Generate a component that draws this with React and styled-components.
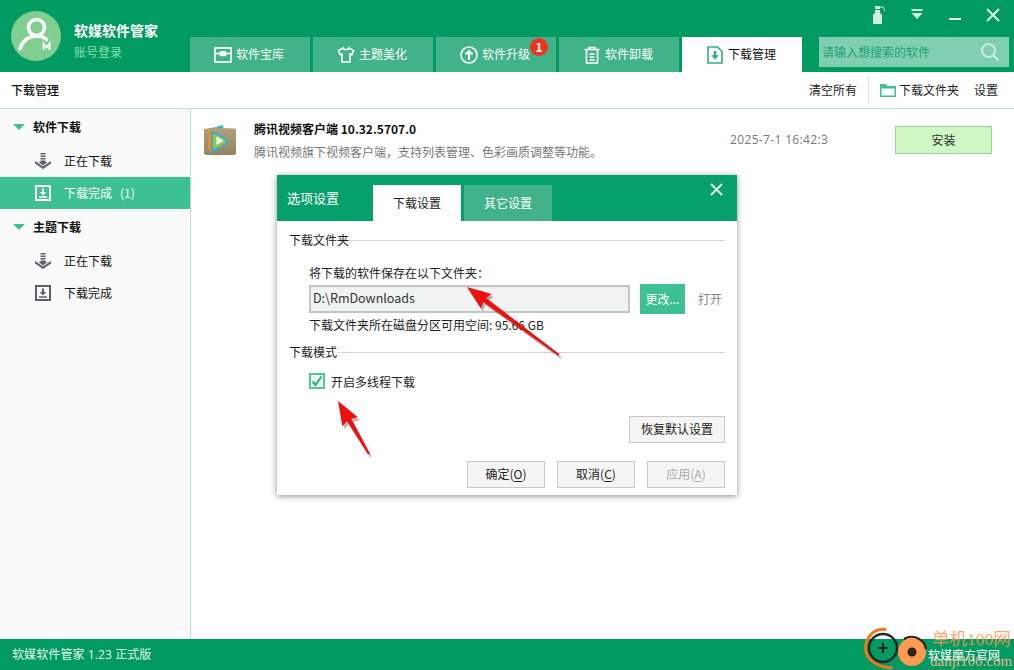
import React from 'react';
import styled, { createGlobalStyle } from 'styled-components';

const GlobalStyle = createGlobalStyle`
  html, body {
    margin: 0;
    padding: 0;
    overflow: hidden;
    background: #ffffff;
  }
  * {
    box-sizing: border-box;
  }
`;

const Page = styled.div`
  position: relative;
  width: 1014px;
  height: 670px;
  overflow: hidden;
  display: flex;
  flex-direction: column;
  font-family: "Noto Sans CJK SC", "Open Sans", sans-serif;
  font-size: 12px;
  color: #222;
`;

// Noto sits a pixel lower than the original font, this lifts a label in a centred row
const Label = styled.span`
  margin-bottom: 2px;
`;

const Header = styled.header`
  height: 72px;
  background: #019a61;
  display: flex;
  flex: none;
`;

const Brand = styled.div`
  width: 190px;
  padding: 11px 0 0 11px;
  display: flex;
  gap: 13px;
`;

const Avatar = styled.div`
  width: 50px;
  height: 50px;
  border-radius: 50%;
  background: #80cf91;
  display: flex;
  align-items: center;
  justify-content: center;
`;

const BrandText = styled.div`
  display: flex;
  flex-direction: column;
  padding-top: 9px;
  gap: 3px;
`;

const BrandName = styled.div`
  color: #fff;
  font-size: 14px;
  font-weight: 700;
  line-height: 20px;
`;

const Login = styled.div`
  color: #86e0b0;
  font-size: 12px;
  line-height: 18px;
`;

const HeaderRight = styled.div`
  flex: 1;
  display: flex;
  flex-direction: column;
`;

const WindowBar = styled.div`
  height: 37px;
  display: flex;
  justify-content: flex-end;
  padding: 3px 2px 0 0;
`;

const WindowButton = styled.div`
  width: 38px;
  height: 24px;
  display: flex;
  align-items: center;
  justify-content: center;
`;

const TabRow = styled.div`
  height: 35px;
  display: flex;
  gap: 3px;
`;

const MainTab = styled.div`
  width: 120px;
  display: flex;
  align-items: center;
  justify-content: center;
  gap: 4px;
  padding-right: 2px;
  position: relative;
  background: ${props => (props.$active ? '#ffffff' : '#42b389')};
  color: ${props => (props.$active ? '#111' : '#fff')};
`;

const Badge = styled.span`
  position: absolute;
  top: 1px;
  right: 8px;
  width: 18px;
  height: 18px;
  border-radius: 50%;
  background: #f0321e;
  color: #fff;
  font-size: 12px;
  font-weight: 700;
  line-height: 18px;
  text-align: center;
`;

const Search = styled.div`
  width: 190px;
  height: 30px;
  margin-left: 14px;
  background: #80cfb0;
  display: flex;
  align-items: center;
  justify-content: space-between;
  padding: 0 9px 0 3px;
  color: #1ea373;
`;

const SubBar = styled.div`
  height: 37px;
  flex: none;
  border-bottom: 1px solid #bfe3d8;
  display: flex;
  align-items: center;
  justify-content: space-between;
  padding: 0 16px 0 11px;
`;

const SubTitle = styled(Label)`
  font-weight: 500;
  color: #111;
`;

const SubActions = styled.div`
  display: flex;
  align-items: center;
`;

const SubDivider = styled.div`
  width: 1px;
  height: 28px;
  margin: 0 11px;
  background: #cfe5dd;
`;

const FolderAction = styled.div`
  display: flex;
  align-items: center;
  gap: 3px;
  margin-right: 15px;
`;

const Body = styled.div`
  flex: 1;
  display: flex;
  min-height: 0;
`;

const Sidebar = styled.aside`
  width: 191px;
  flex: none;
  background: #fafafa;
  border-right: 1px solid #b6e0d2;
  padding-top: 2px;
`;

const GroupHeader = styled.div`
  height: 32px;
  margin-bottom: 2px;
  margin-top: ${props => (props.$spaced ? '2px' : '0')};
  display: flex;
  align-items: center;
  padding-left: 13px;
  gap: 8px;
  font-weight: 700;
  color: #111;
`;

const Caret = styled.span`
  width: 0;
  height: 0;
  border-left: 6px solid transparent;
  border-right: 6px solid transparent;
  border-top: 6px solid #3dc093;
`;

const SideItem = styled.div`
  height: 32px;
  display: flex;
  align-items: center;
  padding-left: 35px;
  gap: 13px;
  background: ${props => (props.$active ? '#3dc093' : 'transparent')};
  color: ${props => (props.$active ? '#fff' : '#111')};
`;

const Main = styled.main`
  flex: 1;
  min-width: 0;
`;

const DownloadRow = styled.div`
  height: 62px;
  display: flex;
  align-items: center;
  padding: 0 22px 0 13px;
`;

const RowText = styled.div`
  flex: 1;
  margin-left: 18px;
  display: flex;
  flex-direction: column;
  gap: 5px;
`;

const RowTitle = styled.div`
  font-weight: 700;
  color: #111;
  line-height: 18px;
`;

const RowDesc = styled.div`
  color: #777;
  line-height: 18px;
`;

const RowDate = styled(Label)`
  width: 165px;
  color: #777;
  font-family: "Open Sans", "Noto Sans CJK SC", sans-serif;
  letter-spacing: 0.35px;
`;

const InstallButton = styled.div`
  width: 97px;
  height: 28px;
  background: #cdf7c3;
  border: 1px solid #9ccf9f;
  color: #333;
  display: flex;
  align-items: center;
  justify-content: center;
`;

const Footer = styled.footer`
  height: 31px;
  flex: none;
  background: #019a61;
  color: #e2f7ec;
  padding-left: 12px;
  display: flex;
  align-items: center;
  font-family: "Open Sans", "Noto Sans CJK SC", sans-serif;
  letter-spacing: 0.1px;
`;

const Dialog = styled.div`
  position: absolute;
  left: 277px;
  top: 175px;
  width: 460px;
  height: 320px;
  background: #fff;
  box-shadow: 0 1px 6px rgba(0, 0, 0, 0.45);
`;

const DialogHeader = styled.div`
  height: 46px;
  background: #06a06a;
  display: flex;
  align-items: flex-end;
  position: relative;
`;

const DialogTitle = styled.div`
  width: 96px;
  padding-left: 10px;
  align-self: flex-start;
  padding-top: 14px;
  color: #fff;
  font-size: 13px;
  line-height: 18px;
`;

const DialogTab = styled.div`
  width: 88px;
  height: 36px;
  margin-right: 3px;
  display: flex;
  align-items: center;
  justify-content: center;
  background: ${props => (props.$active ? '#ffffff' : '#42b389')};
  color: ${props => (props.$active ? '#222' : '#fff')};
`;

const DialogClose = styled.div`
  position: absolute;
  right: 14px;
  top: 8px;
  display: flex;
`;

const DialogBody = styled.div`
  padding: 11px 12px 0;
  display: flex;
  flex-direction: column;
`;

const Legend = styled.div`
  display: flex;
  align-items: center;
  height: 16px;
  line-height: 16px;
  margin-top: ${props => (props.$spaced ? '11px' : '0')};
  &::after {
    content: "";
    flex: 1;
    height: 1px;
    background: #d4d4d4;
  }
`;

const Indented = styled.div`
  padding-left: 20px;
  line-height: 16px;
  margin-top: ${props => props.$top || 0}px;
`;

const PathRow = styled.div`
  display: flex;
  align-items: center;
  padding-left: 20px;
  margin-top: 3px;
  height: 30px;
`;

const PathInput = styled.div`
  width: 321px;
  height: 28px;
  background: #eff3f1;
  border: 2px solid #c4c4c4;
  padding: 0 0 3px 2px;
  display: flex;
  align-items: center;
  color: #333;
  font-size: 12.5px;
`;

const ChangeButton = styled.div`
  width: 45px;
  height: 30px;
  margin-left: 10px;
  background: #3dc093;
  color: #fff;
  display: flex;
  align-items: center;
  justify-content: center;
`;

const OpenLink = styled(Label)`
  margin-left: 13px;
  color: #7a8694;
`;

const CheckRow = styled.div`
  display: flex;
  align-items: center;
  gap: 6px;
  height: 16px;
  padding-left: 20px;
  margin-top: 13px;
`;

const CheckBox = styled.div`
  width: 16px;
  height: 16px;
  border: 2px solid #52c98e;
  background: #f4f4f4;
  display: flex;
  align-items: center;
  justify-content: center;
`;

const ButtonLine = styled.div`
  display: flex;
  justify-content: flex-end;
  gap: 12px;
  margin-top: ${props => props.$top}px;
`;

const PlainButton = styled.div`
  width: ${props => props.$width || 78}px;
  height: 27px;
  background: #f5f5f5;
  border: 1px solid #c8c8c8;
  display: flex;
  align-items: center;
  justify-content: center;
  color: ${props => (props.$disabled ? '#aaa' : '#222')};
  u {
    text-underline-offset: 2px;
  }
`;

const ArrowLayer = styled.svg`
  position: absolute;
  left: 0;
  top: 0;
  pointer-events: none;
`;

const Watermark = styled.div`
  position: absolute;
  left: 860px;
  top: 625px;
  width: 154px;
  height: 45px;
`;

const MarkSite = styled.div`
  position: absolute;
  left: 72px;
  top: 3px;
  font-family: "Liberation Serif", "Noto Sans CJK SC", serif;
  font-size: 17.5px;
  line-height: 22px;
  color: rgba(255, 150, 90, 0.85);
  white-space: nowrap;
`;

const MarkDomain = styled.div`
  position: absolute;
  left: 70px;
  top: 27px;
  font-family: "Liberation Serif", serif;
  font-size: 15px;
  line-height: 18px;
  color: #e9b08a;
  white-space: nowrap;
`;

const MarkName = styled.div`
  position: absolute;
  left: 68px;
  top: 22px;
  font-size: 12px;
  line-height: 16px;
  color: #fff;
  white-space: nowrap;
`;

const TabIcon = ({ name, color = '#fff' }) => {
  const common = { width: 18, height: 18, viewBox: '0 0 18 18', fill: 'none', stroke: color, strokeWidth: 1.6 };
  if (name === 'box') {
    return (
      <svg {...common}>
        <rect x="1" y="2" width="16" height="14" />
        <path d="M1 7.5h16" />
        <rect x="6.5" y="6" width="5" height="3.4" fill={color} />
      </svg>
    );
  }
  if (name === 'shirt') {
    return (
      <svg {...common}>
        <path d="M6 2 1.5 4.5 3 8.5 5 8v8h8V8l2 .5 1.500-4L12 2c-.5 2-5.500 2-6 0Z" />
      </svg>
    );
  }
  if (name === 'up') {
    return (
      <svg {...common}>
        <circle cx="9" cy="9" r="8" />
        <path d="M9 14V5M5.500 8.500 9 5l3.500 3.500" strokeWidth="2" />
      </svg>
    );
  }
  if (name === 'trash') {
    return (
      <svg {...common}>
        <path d="M1.500 3.500h15M6 3.500V1.500h6v2M3.500 3.500V17h11V3.500M6.500 8h5M6.500 11h5M6.500 14h5" />
      </svg>
    );
  }
  return (
    <svg {...common} stroke="#2fb083">
      <path d="M2 1h9.500L16 5.500V17H2Z" />
      <path d="M9 5v7" strokeWidth="2.600" />
      <path d="M5.200 9.200 9 13.500l3.800-4.300Z" fill="#2fb083" stroke="none" />
    </svg>
  );
};

const DownloadingIcon = () => (
  <svg width="16" height="16" viewBox="0 0 16 16" fill="#5a6068">
    <rect x="5.500" y="0" width="5" height="1.500" />
    <rect x="5.500" y="2.500" width="5" height="1.500" />
    <rect x="5.500" y="5" width="5" height="1.500" />
    <path d="M5.500 7.500h5V9H12.500L8 12.500 3.500 9h2Z" />
    <path d="M0 8l8 5.500L16 8v2.500L8 16 0 10.500Z" />
  </svg>
);

const DoneIcon = ({ color = '#5a6068' }) => (
  <svg width="16" height="16" viewBox="0 0 16 16" fill="none" stroke={color} strokeWidth="2">
    <rect x="1" y="1" width="14" height="14" />
    <path d="M8 3.500v4" />
    <path d="M4.800 7h6.400L8 10.400Z" fill={color} stroke="none" />
    <path d="M4 12h8" strokeWidth="1.500" />
  </svg>
);

const VideoAppIcon = () => (
  <svg width="32" height="32" viewBox="0 0 32 32">
    <defs>
      <linearGradient id="folderFill" x1="0" y1="0" x2="0" y2="1">
        <stop offset="0" stopColor="#b3a37c" />
        <stop offset="1" stopColor="#94835f" />
      </linearGradient>
    </defs>
    <path d="M0 5 15 2.500l2 1.500 14 .5 1 1.500V29c0 1-1 2-2 2H3c-1 0-3-1-3-2Z" fill="url(#folderFill)" />
    <path d="M13 2.500 19 1l.5 3-5.500 1Z" fill="#3cb6d8" />
    <path d="M4 11c0-2 2-4 4-4h5L8 28c-2-1-4-2-4-4Z" fill="#f58a1f" />
    <path d="M7 7.500c5-.5 17 7 17 10 0 3-13 10-16 10.500-1 0-1-1-1-2Z" fill="#35a8ea" />
    <path d="M9 10c4 0 12 5 13 7.500-2 3-9 7-13 7.500Z" fill="#8ccb3a" />
    <path d="M12.500 12.500v8.500l7-4.300Z" fill="#fff" />
  </svg>
);

const RedArrow = ({ x1, y1, x2, y2, head = 24, wide = 9 }) => {
  const len = Math.hypot(x2 - x1, y2 - y1);
  const ux = (x2 - x1) / len;
  const uy = (y2 - y1) / len;
  const px = -uy;
  const py = ux;
  const bx = x1 + ux * head;
  const by = y1 + uy * head;
  const nx = x1 + ux * (head - 6);
  const ny = y1 + uy * (head - 6);
  const pts = [
    [x1, y1],
    [bx + px * wide, by + py * wide],
    [nx + ux * 4 + px * 2.500, ny + uy * 4 + py * 2.500],
    [x2 + px * 1, y2 + py * 1],
    [x2 - px * 1, y2 - py * 1],
    [nx + ux * 4 - px * 2.500, ny + uy * 4 - py * 2.500],
    [bx - px * wide, by - py * wide],
  ].map(p => p.join(',')).join(' ');
  return (
    <g>
      <polygon points={pts} fill="#000" opacity="0.28" transform="translate(2 3)" />
      <polygon points={pts} fill="#ee0f10" />
    </g>
  );
};

export default function App() {
  return (
    <Page>
      <GlobalStyle />
      <Header>
        <Brand>
          <Avatar>
            <svg width="50" height="50" viewBox="0 0 50 50" fill="none" stroke="#fff" strokeWidth="3.500">
              <circle cx="25.500" cy="16.500" r="8" />
              <path d="M9 38c2-8 9-13 17-13 4 0 7 1 9.500 3.500" strokeLinecap="round" />
              <path d="M32.500 39v-6.500l3 4 3-4V39" strokeWidth="1.800" />
            </svg>
          </Avatar>
          <BrandText>
            <BrandName>软媒软件管家</BrandName>
            <Login>账号登录</Login>
          </BrandText>
        </Brand>
        <HeaderRight>
          <WindowBar>
            <WindowButton>
              <svg width="14" height="20" viewBox="0 0 14 20" fill="#cfeedd">
                <path d="M3 5h5v3c2 1 2 2 2 3v8H1v-8c0-1 0-2 2-3Z" />
                <path d="M3 1h5v3H3Z" />
                <path d="M8 2h3l1.500 2.500V6" fill="none" stroke="#cfeedd" strokeWidth="1" />
              </svg>
            </WindowButton>
            <WindowButton>
              <svg width="14" height="14" viewBox="0 0 14 14" fill="#d6efe3">
                <rect x="1.500" y="1" width="11" height="2" />
                <path d="M1.500 5h11L7 11Z" />
              </svg>
            </WindowButton>
            <WindowButton>
              <svg width="14" height="14" viewBox="0 0 14 14" fill="#e4f4ec">
                <rect x="1" y="10" width="12" height="2" />
              </svg>
            </WindowButton>
            <WindowButton>
              <svg width="14" height="14" viewBox="0 0 14 14" stroke="#e8f6ef" strokeWidth="1.800">
                <path d="M1 1l12 12M13 1 1 13" />
              </svg>
            </WindowButton>
          </WindowBar>
          <TabRow>
            <MainTab><TabIcon name="box" /><Label>软件宝库</Label></MainTab>
            <MainTab><TabIcon name="shirt" /><Label>主题美化</Label></MainTab>
            <MainTab><TabIcon name="up" /><Label>软件升级</Label><Badge>1</Badge></MainTab>
            <MainTab><TabIcon name="trash" /><Label>软件卸载</Label></MainTab>
            <MainTab $active><TabIcon name="download" /><Label>下载管理</Label></MainTab>
            <Search>
              <Label>请输入想搜索的软件</Label>
              <svg width="20" height="20" viewBox="0 0 20 20" fill="none" stroke="#c9efdf" strokeWidth="2">
                <circle cx="8.500" cy="8.500" r="6.500" />
                <path d="m13.500 13.500 5 5" />
              </svg>
            </Search>
          </TabRow>
        </HeaderRight>
      </Header>

      <SubBar>
        <SubTitle>下载管理</SubTitle>
        <SubActions>
          <Label>清空所有</Label>
          <SubDivider />
          <FolderAction>
            <svg width="16" height="14" viewBox="0 0 16 14" fill="#3dc093">
              <path d="M0 1h6l1.500 2H16v11H0Zm1.500 4.500V12.500h13V5.500Z" fillRule="evenodd" />
            </svg>
            <Label>下载文件夹</Label>
          </FolderAction>
          <Label>设置</Label>
        </SubActions>
      </SubBar>

      <Body>
        <Sidebar>
          <GroupHeader><Caret /><Label>软件下载</Label></GroupHeader>
          <SideItem><DownloadingIcon /><Label>正在下载</Label></SideItem>
          <SideItem $active><DoneIcon color="#fff" /><Label>下载完成&nbsp;&nbsp;&nbsp;(1)</Label></SideItem>
          <GroupHeader $spaced><Caret /><Label>主题下载</Label></GroupHeader>
          <SideItem><DownloadingIcon /><Label>正在下载</Label></SideItem>
          <SideItem><DoneIcon /><Label>下载完成</Label></SideItem>
        </Sidebar>
        <Main>
          <DownloadRow>
            <VideoAppIcon />
            <RowText>
              <RowTitle>腾讯视频客户端 10.32.5707.0</RowTitle>
              <RowDesc>腾讯视频旗下视频客户端，支持列表管理、色彩画质调整等功能。</RowDesc>
            </RowText>
            <RowDate>2025-7-1 16:42:3</RowDate>
            <InstallButton><Label>安装</Label></InstallButton>
          </DownloadRow>
        </Main>
      </Body>

      <Footer><Label>软媒软件管家 1.23 正式版</Label></Footer>

      <Dialog>
        <DialogHeader>
          <DialogTitle>选项设置</DialogTitle>
          <DialogTab $active><Label>下载设置</Label></DialogTab>
          <DialogTab><Label>其它设置</Label></DialogTab>
          <DialogClose>
            <svg width="13" height="13" viewBox="0 0 13 13" stroke="#e8f6ef" strokeWidth="1.800">
              <path d="M1 1l11 11M12 1 1 12" />
            </svg>
          </DialogClose>
        </DialogHeader>
        <DialogBody>
          <Legend>下载文件夹</Legend>
          <Indented $top={17}>将下载的软件保存在以下文件夹：</Indented>
          <PathRow>
            <PathInput>D:\RmDownloads</PathInput>
            <ChangeButton><Label>更改...</Label></ChangeButton>
            <OpenLink>打开</OpenLink>
          </PathRow>
          <Indented $top={3}>下载文件夹所在磁盘分区可用空间: 95.66 GB</Indented>
          <Legend $spaced>下载模式</Legend>
          <CheckRow>
            <CheckBox>
              <svg width="12" height="12" viewBox="0 0 12 12" fill="none" stroke="#22b67c" strokeWidth="2">
                <path d="M1.500 6.500 4.500 10 10.500 1.500" />
              </svg>
            </CheckBox>
            开启多线程下载
          </CheckRow>
          <ButtonLine $top={27}>
            <PlainButton $width={96}><Label>恢复默认设置</Label></PlainButton>
          </ButtonLine>
          <ButtonLine $top={18}>
            <PlainButton><Label>确定(<u>O</u>)</Label></PlainButton>
            <PlainButton><Label>取消(<u>C</u>)</Label></PlainButton>
            <PlainButton $disabled><Label>应用(<u>A</u>)</Label></PlainButton>
          </ButtonLine>
        </DialogBody>
      </Dialog>

      <ArrowLayer width="1014" height="670" viewBox="0 0 1014 670">
        <RedArrow x1={467} y1={287} x2={559} y2={355} />
        <RedArrow x1={338} y1={401} x2={369} y2={454} />
      </ArrowLayer>

      <Watermark>
        <svg width="80" height="45" viewBox="0 0 80 45" fill="none">
          <path d="M26 4.500C12 3 5.500 14 5.500 24c.5 11 14 19 27 19" stroke="#f4761b" strokeWidth="3" />
          <circle cx="23" cy="23" r="14" stroke="#262626" strokeWidth="2.400" />
          <path d="M23 18v10M18 23h10" stroke="#262626" strokeWidth="2" />
          <circle cx="52" cy="27" r="14" fill="#ff9a52" />
          <path d="M44 14c8-5 20-1 22 10" stroke="#262626" strokeWidth="2.200" />
          <circle cx="52" cy="27" r="4.500" fill="#2b2320" />
        </svg>
        <MarkSite>单机100网</MarkSite>
        <MarkDomain>danji100.com</MarkDomain>
        <MarkName>软媒魔方官网</MarkName>
      </Watermark>
    </Page>
  );
}
